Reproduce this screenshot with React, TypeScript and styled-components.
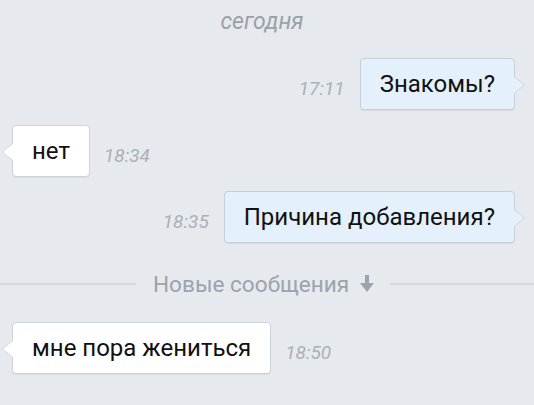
import React from "react";
import styled, { createGlobalStyle, css } from "styled-components";

const Global = createGlobalStyle`
  html, body { margin: 0; padding: 0; background: #e6eaee; }
  body { font-family: Roboto, "Noto Sans", sans-serif; }
`;

const Screen = styled.div`
  width: 534px;
  height: 405px;
  background: #e6eaee;
  overflow: hidden;
  display: flex;
  flex-direction: column;
`;

const DateLabel = styled.div`
  height: 44px;
  padding-top: 7px;
  box-sizing: border-box;
  text-align: center;
  padding-right: 10px;
  font-style: italic;
  font-size: 23px;
  line-height: 30px;
  color: #9aa0a8;
`;

const Row = styled.div<{ $out?: boolean }>`
  display: flex;
  align-items: center;
  justify-content: ${(p) => (p.$out ? "flex-end" : "flex-start")};
  gap: ${(p) => (p.$out ? "15px" : "14px")};
  padding: ${(p) => (p.$out ? "0 19px 0 0" : "0 0 0 12px")};
  margin-top: ${(p) => (p.$out ? "14px" : "15px")};
`;

const Time = styled.span<{ $out?: boolean }>`
  order: ${(p) => (p.$out ? 0 : 1)};
  font-style: italic;
  font-size: 19px;
  color: #aab0b7;
  margin-top: 8px;
`;

const Bubble = styled.div<{ $out?: boolean }>`
  position: relative;
  padding: 11px 19px;
  font-size: 24px;
  line-height: 28px;
  color: #111;
  border-radius: 4px;
  border: 1px solid ${(p) => (p.$out ? "#c3d0dc" : "#cdd3da")};
  background: ${(p) => (p.$out ? "#e4f1fc" : "#ffffff")};
  box-shadow: 0 1px 0 rgba(0, 0, 0, 0.06);

  &::before,
  &::after {
    content: "";
    position: absolute;
    top: 50%;
    width: 0;
    height: 0;
    border-top: 9px solid transparent;
    border-bottom: 9px solid transparent;
    margin-top: -8px;
  }

  ${(p) =>
    p.$out
      ? css`
          &::before {
            right: -11px;
            border-left: 11px solid #c3d0dc;
          }
          &::after {
            right: -10px;
            border-left: 11px solid #e4f1fc;
          }
        `
      : css`
          &::before {
            left: -11px;
            border-right: 11px solid #cdd3da;
          }
          &::after {
            left: -10px;
            border-right: 11px solid #ffffff;
          }
        `}
`;

const Divider = styled.div`
  display: flex;
  align-items: center;
  margin-top: 26px;
  margin-bottom: 8px;
  height: 30px;
`;

const Line = styled.div`
  flex: 1;
  height: 2px;
  background: #d2d8de;
`;

const LeftLine = styled(Line)`
  flex: 0 0 136px;
`;

const DividerLabel = styled.div`
  display: flex;
  align-items: center;
  gap: 11px;
  padding: 0 16px 0 17px;
  font-size: 22.6px;
  color: #9ba3ad;
`;

const DownArrow = () => (
  <svg width="14" height="18" viewBox="0 0 14 18">
    <rect x="5" y="0" width="4" height="9" fill="#9ba3ad" />
    <polygon points="0,8 14,8 7,17" fill="#9ba3ad" />
  </svg>
);

type Msg = { text: string; time: string; out?: boolean };

const Message = ({ text, time, out }: Msg) => (
  <Row $out={out}>
    <Time $out={out}>{time}</Time>
    <Bubble $out={out}>{text}</Bubble>
  </Row>
);

export default function App() {
  return (
    <>
      <Global />
      <Screen>
        <DateLabel>сегодня</DateLabel>
        <Message out text="Знакомы?" time="17:11" />
        <Message text="нет" time="18:34" />
        <Message out text="Причина добавления?" time="18:35" />
        <Divider>
          <LeftLine />
          <DividerLabel>
            Новые сообщения
            <DownArrow />
          </DividerLabel>
          <Line />
        </Divider>
        <Message text="мне пора жениться" time="18:50" />
      </Screen>
    </>
  );
}
